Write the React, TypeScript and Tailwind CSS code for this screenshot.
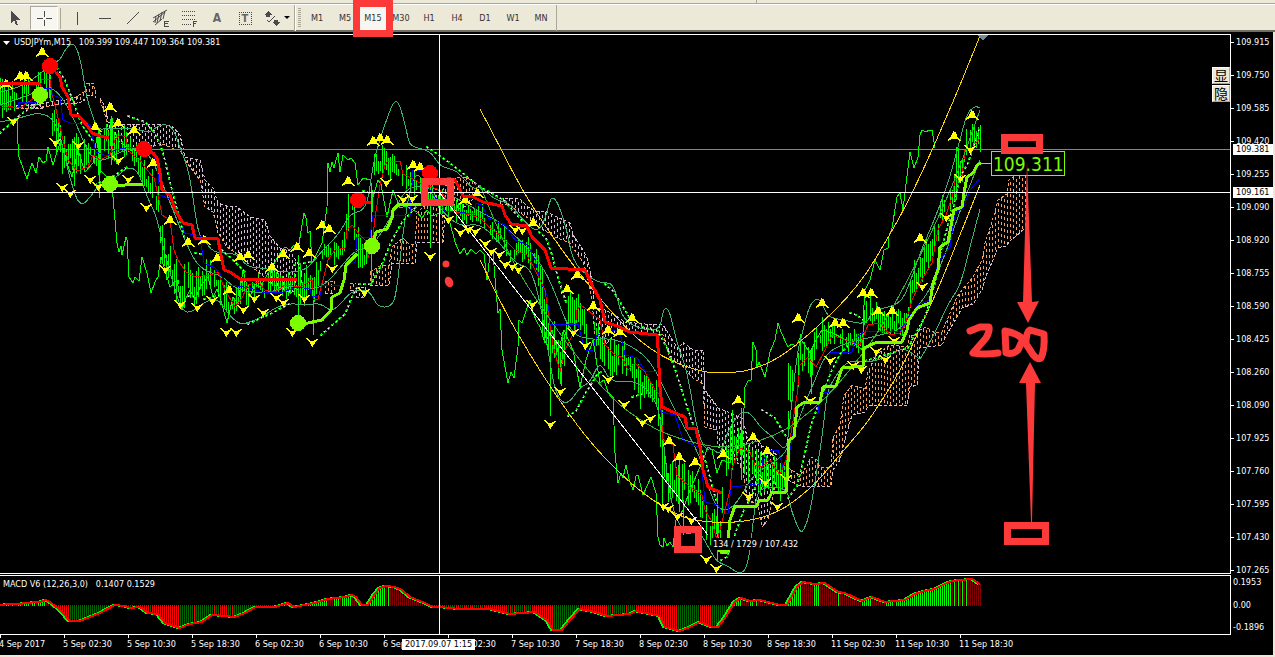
import type { ReactNode } from 'react'

type Pt = [number, number]
type Band = [number, number, number]

const nums = (s: string) => s.trim().split(/\s+/).map((p) => p.split(',').map(Number))
const pts = (s: string) => nums(s) as Pt[]
const bands = (s: string) => nums(s) as Band[]

// value of a keyframed series at x, column `col` of each keyframe
function at(keys: number[][], x: number, col: number) {
  if (x <= keys[0][0]) return keys[0][col]
  for (let i = 1; i < keys.length; i++) {
    const a = keys[i - 1]
    const b = keys[i]
    if (x <= b[0]) return a[col] + ((b[col] - a[col]) * (x - a[0])) / (b[0] - a[0] || 1)
  }
  return keys[keys.length - 1][col]
}

function noise(n: number) {
  const v = Math.sin(n * 12.9898) * 43758.5453
  return v - Math.floor(v)
}

// ---- price range per bar: x, high, low
const priceRange = bands(`
0,82,115 10,82,112 20,80,105 30,76,105 38,68,95 44,58,95 50,74,100 52,98,138 58,118,158 64,138,182 70,142,168 76,132,190
82,142,178 90,138,162 98,132,190 105,122,150 110,118,158 116,128,162 122,128,155 128,132,158 134,142,165 140,152,178
146,168,195 152,172,200 158,185,220 162,232,275 168,248,280 172,252,295 178,262,300 182,275,310 188,255,295 194,268,308
200,268,300 206,258,290 212,260,288 218,268,298 224,280,310 228,288,323 234,297,318 240,272,302 248,278,308 256,272,295
264,278,306 270,264,290 276,268,295 284,277,298 292,268,290 298,262,315 306,264,298 312,272,310 318,260,285 323,240,260
330,238,262 336,242,265 343,240,258 347,195,237 352,180,225 356,222,250 360,230,280 365,240,284 370,215,270 373,153,180
380,148,176 390,152,176 398,160,184 404,168,192 416,172,194 424,180,202 436,188,208 453,200,218 470,205,220 483,208,226
488,218,234 503,224,248 510,240,262 525,238,262 537,246,280 541,262,330 547,302,345 553,325,375 562,322,385 566,298,345
575,290,325 584,306,345 594,305,348 602,332,368 612,338,382 622,336,375 633,345,385 640,368,405 657,375,405 661,395,480
667,462,505 680,462,502 690,465,510 700,470,515 705,505,548 712,510,553 720,500,553 724,462,490 731,414,462 742,412,470
748,442,480 760,452,492 770,455,490 780,465,500 787,460,490 789,368,400 797,362,392 800,338,368 812,342,378 816,326,352
826,318,345 836,326,350 850,332,352 862,330,354 865,296,330 876,298,328 882,314,332 906,310,332 911,272,300 920,248,282
930,236,264 937,222,252 940,192,228 952,184,208 956,148,192 963,150,185 966,128,152 974,124,148 980,130,160`)

const spikes = bands(`99,130,198 111,116,165 162,225,262 313,300,335 298,255,322 430,183,248 371,183,285 550,340,416 561,360,386
662,410,505 717,490,560 683,500,535 679,452,512 732,410,470 741,408,480 811,350,394 788,363,400 956,147,200 980,125,152 49,70,98`)

// ---- clouds: x, top, bottom
const plumClouds = [
  '16,106,109 40,104,108 62,100,104 76,97,103',
  '100,98,100 106,108,118 108,122,130 120,124,142 130,124,150 145,124,150 160,124,143 172,126,148 180,135,150 185,157,160 200,160,180 205,180,207 213,188,212 218,203,233 227,206,247 237,207,254 250,217,265 265,220,278 270,236,283 280,248,288 290,251,293 297,262,290 303,276,287',
  '356,287,297 366,287,298',
  '500,198,204 510,198,205 520,199,213 528,207,218 535,211,225 547,212,232 555,216,237 570,223,243 573,235,248 583,250,262 587,258,275 592,280,300 595,308,335 605,310,345 615,315,335 625,322,330 645,324,333 663,325,335 670,336,358 678,349,363 683,342,367 693,350,378 703,350,384 705,390,427 717,406,430 718,408,447 730,413,453 743,419,470 747,437,500 758,440,505 762,446,527 768,449,520 772,450,500 778,457,472',
]
const sandClouds = [
  '30,106,109 44,102,108',
  '74,98,104 84,92,101 87,83,96 93,83,95 96,94,98',
  '325,282,293 335,281,293',
  '350,283,290 356,284,292',
  '370,272,285 382,265,285 389,266,285 392,247,263 403,238,263 408,243,263 415,245,263 417,213,242 428,202,242 443,190,242 445,186,212 457,178,210 466,177,206 474,182,198',
  '788,468,480 800,475,486 807,466,486 811,457,486 817,460,486 820,467,486 831,467,486 833,438,470 840,425,460 844,396,443 852,385,415 865,389,412 868,372,406 876,355,405 890,345,405 907,347,405 910,335,387 917,335,385 920,330,347 926,327,347 935,333,346 942,332,345 947,320,334 957,297,317 962,290,308 973,277,304 982,260,290 985,243,279 992,222,262 998,200,248 1007,194,246 1009,180,241 1014,176,238 1025,175,228',
]

function cloudPath(src: string) {
  const keys = bands(src)
  let d = ''
  for (let x = keys[0][0]; x <= keys[keys.length - 1][0]; x += 3) {
    const top = Math.round(at(keys, x, 1))
    const bottom = Math.round(at(keys, x, 2))
    const shift = Math.floor(x / 3) % 2 ? 0 : 3
    for (let y = top + shift; y < bottom; y += 6) d += `M${x + 0.5} ${y}v${Math.min(3, bottom - y)}`
  }
  return d
}

function cloudEdge(src: string, col: number) {
  return bands(src).map((b) => `${b[0]},${b[col]}`).join(' ')
}

// ---- indicator lines
const chikou = `17,118 17,130 19,157 27,179 29,172 32,163 36,173 39,157 43,163 46,161 48,147 53,165 57,152 61,140 67,163 72,177 78,150 85,172 93,163
97,137 100,170 110,180 113,197 117,243 119,252 121,246 122,255 126,237 127,240 129,277 133,283 135,277 139,281 142,257 147,273 151,293 155,282 158,277
161,257 167,277 170,287 177,280 182,310 186,298 190,290 195,300 200,287 208,277 213,297 217,289 220,297 227,323 233,297 238,304 243,270 250,297 255,284 260,287
270,270 275,262 280,253 285,247 290,250 294,245 298,250 304,213 306,218 308,233 310,231 312,263 316,255 322,243 327,207 328,163 330,172 332,162 334,168 338,153 340,172
343,155 348,160 351,158 355,163 358,185 363,178 370,180 373,197 378,180 381,184 387,217 393,190 400,208 406,206 413,210 417,212 422,218 427,210 432,216 440,213
450,223 455,242 460,254 464,248 467,255 471,249 476,254 480,250 484,254 487,280 490,255 493,253 496,290 498,313 500,309 502,350 508,383 511,372 514,378 518,347 519,320
522,323 525,314 530,300 533,313 537,322 540,327 545,343 552,330 558,352 564,330 573,350 580,387 586,360 593,340 600,383 604,380 608,392 613,397 615,453 618,483 621,473 623,478
626,465 629,479 633,490 636,476 638,475 643,495 651,477 656,493 658,537 660,545 663,547 664,538 667,546 670,542 673,547 676,520 683,510 690,490 703,460 708,447 712,450
717,473 722,460 730,463 736,445 743,430 745,387 748,381 751,380 753,342 756,350 757,367 759,362 765,377 770,352 775,340 778,323 781,332 788,347 792,344 796,346
800,338 806,347 810,353 816,340 822,330 833,333 842,338 853,343 863,350 863,320 865,290 870,280 875,260 880,270 884,250 888,248 889,236 892,228 897,197 900,193 903,210
907,176 910,152 914,168 918,157 920,135 922,130 926,132 929,130 932,130 935,148`

const bandLines = [
  // upper
  `0,92 20,88 40,74 55,62 60,60 66,48 72,43 77,48 82,67 86,95 92,115 98,130 108,128 133,128 150,133 157,126 167,124 174,130 180,148 187,165 192,190 196,220 200,237 205,240 213,253 237,253
  247,267 263,268 287,273 307,270 320,253 340,233 350,213 367,210 373,163 380,140 382,133 390,110 395,100 400,105 407,133 410,147 430,150 440,167 457,170 473,190 480,186 495,200 510,203 520,217
  537,233 545,220 550,200 553,197 558,203 567,230 573,263 593,280 603,283 612,283 617,297 623,320 643,330 660,330 663,310 667,308 670,313 678,347 687,370 697,430 705,450 713,448 720,456 728,430
  740,412 750,412 760,427 773,437 782,448 787,447 790,420 797,353 803,330 810,303 820,297 827,317 843,320 867,325 872,310 900,305 910,283 920,253 933,223 947,187 960,140 967,113 975,106 980,108`,
  // middle
  `0,105 30,95 45,88 52,88 62,97 73,117 83,140 90,155 100,162 115,155 130,148 145,150 155,165 165,190 175,215 185,240 195,262 207,272 220,275 235,288 250,292 270,293 290,285 310,290 325,285
  340,268 355,250 370,248 380,235 395,210 405,190 420,185 440,190 460,200 480,212 500,222 520,240 540,262 553,287 570,333 590,340 610,338 630,345 650,360 665,390 680,420 700,455 712,500 722,511
  732,508 742,495 750,480 760,470 775,462 788,450 800,415 815,380 825,355 840,345 860,340 880,335 900,330 915,310 930,290 945,255 955,225 968,190 980,160`,
  // lower
  `0,122 20,118 40,112 55,120 63,147 70,180 80,208 92,195 97,187 117,177 127,167 138,170 147,197 157,217 163,247 173,283 182,312 193,312 207,300 220,300 227,313 240,325 250,322 260,318 283,303
  307,305 320,303 332,312 342,302 353,290 370,290 377,307 392,307 397,290 403,230 413,172 425,180 440,210 460,227 480,223 500,243 517,265 530,267 540,300 550,363 555,390 562,403 570,402 580,387
  590,383 600,360 610,383 637,380 657,400 663,437 670,500 680,527 688,536 697,527 710,550 717,562 730,567 737,573 745,572 750,553 755,503 760,487 787,487 790,507 800,533 804,530 810,513
  817,470 823,430 827,393 833,380 847,360 867,363 887,357 903,347 917,357 920,360 927,347 933,337 950,300 960,287 970,247 980,209`,
]

const tenkan = `0,105 20,108 38,95 42,79 50,79 52,95 55,105 63,140 68,160 77,171 88,167 93,155 100,160 110,155 115,140 120,135 126,137 128,150 135,157 140,160 147,170 154,178 158,195 162,215 170,220
174,250 178,260 186,272 195,277 210,275 218,272 225,290 235,307 242,298 248,285 258,282 265,290 275,292 285,285 300,287 312,280 314,299 318,299 325,272 328,260 335,250 345,248 347,230 352,225 360,235
365,240 368,258 372,245 375,218 380,185 385,165 388,161 400,161 403,174 415,180 420,183 440,190 455,212 470,215 480,218 490,228 500,235 515,250 527,255 535,270 545,290 550,325 553,345 560,372 565,350
575,330 577,310 581,305 590,312 600,320 605,345 615,355 622,357 628,370 635,363 645,372 655,390 660,395 663,440 673,445 677,475 690,487 702,495 705,510 712,522 717,540 720,530 725,510 730,490 732,468
740,448 750,452 755,465 762,467 770,460 780,475 786,460 790,440 797,395 800,365 808,357 816,367 825,350 832,335 845,340 860,345 868,325 880,323 890,335 900,333 905,325 912,300 920,283 932,263
938,230 946,215 952,197 955,180 962,177 965,150 972,148 980,138`

const kijun = `0,107 18,107 18,102 40,102 44,88 50,88 53,95 60,98 63,120 70,123 85,124 90,125 93,140 96,152 107,156 115,150 130,147 150,150 157,163 160,195 172,200 177,215 185,233 200,236 204,263 215,268
222,277 230,285 250,288 262,292 280,293 297,287 310,289 312,296 320,296 322,285 342,285 348,265 355,262 357,237 370,237 373,215 410,215 413,170 425,170 430,190 445,211 475,214 475,203 482,205 488,218
505,225 515,240 528,245 535,260 540,280 547,295 550,324 578,324 585,350 593,350 597,335 612,330 620,332 625,355 637,358 645,371 660,371 661,412 675,415 683,440 700,448 705,502 718,505 722,513
728,513 731,487 760,484 763,460 770,450 778,450 784,470 787,475 790,450 797,413 818,413 820,392 829,392 830,353 852,352 856,338 865,331 900,331 910,315 918,305 930,300 938,262 950,247 955,213
963,208 970,190 980,178`

const redTrend = [
  '0,83 40,83',
  '56,72 60,77 62,87 68,97 71,115 79,116 82,120 87,125 92,133 100,136 109,138',
  '147,152 153,153 157,158 160,173 162,190 170,195 175,210 183,223 192,225 195,238 218,239 221,255 224,270 230,272 240,279 297,279',
  '358,202 371,203',
  '447,178 455,180 463,196 473,197 483,202 502,206 505,215 511,224 527,226 532,237 545,250 551,268 585,270 593,287 600,300 605,322 617,326 630,332 657,335 658,348 660,387 662,407 673,412 685,417 687,428 696,429 700,447 703,470 708,487 722,493',
]
const greenTrend = [
  '110,186 125,185 143,184',
  '298,323 308,323 322,320 331,310 332,297 340,293 344,280 346,265 357,254',
  '372,246 376,232 387,229 392,218 393,210 399,204 422,204',
  '728,540 730,520 735,506 757,506 759,500 768,500 772,492 786,492 788,463 789,440 794,437 797,407 803,403 820,402 823,387 836,386 842,368 863,366 864,348 875,343 902,342 907,330 909,320 917,308 930,303 933,283 938,270 940,247 948,242 954,210 962,207 964,193 967,177 973,173 977,165 981,163',
]

const sarRuns = [
  '0,133 20,115 36,104', '57,68 64,78 70,93 77,112 82,125 93,141', '128,116 145,122 154,132 160,144 163,153 170,182 178,213 185,240',
  '95,185 112,177 127,167', '222,250 235,262 247,274', '195,253 203,254', '188,296 194,296', '204,299 222,295', '248,324 270,314 291,303',
  '294,265 310,262', '321,335 345,314 352,297 359,284 371,284 383,262 392,240 402,222 418,205', '427,147 450,163 480,187 504,200 514,212 523,222',
  '539,232 546,238 552,255 558,278 566,302', '605,284 613,291 622,305 629,317', '642,327 658,331 668,350 676,372 688,410 697,435 706,463 716,500',
  '568,416 576,411 585,394 597,375 603,370', '632,397 642,394', '721,560 727,557 733,540 743,512 752,495 761,473', '762,410 775,418 788,440',
  '788,498 797,486 803,462 811,425 820,400 832,370 840,354 849,345', '865,361 885,355 908,348 912,340 925,317 935,283 940,255 948,225 954,205 960,177 968,163 974,145 980,126',
  '850,313 857,315 863,320', '363,191 370,193',
]

const upMarks = pts(`42,52 20,76 26,76 6,84 95,127 110,107 118,123 134,130 153,163 170,220 188,242 204,240 217,258 240,257 229,290 248,255 272,267 283,254
297,247 309,253 322,225 329,229 348,181 373,141 380,138 387,140 413,165 420,167 465,200 477,193 533,223 577,275 567,289 593,306 632,318 608,330 620,332
669,441 679,457 695,462 723,454 738,400 753,437 767,451 822,303 798,318 863,293 871,293 878,311 892,311 835,323 843,323 920,238 954,136 972,115`)
const downMarks = pts(`13,122 55,143 78,146 118,161 128,180 62,188 70,194 90,180 98,187 146,208 165,270 180,305 197,308 212,301 226,333 236,333 243,310 254,299
263,313 276,298 283,303 304,299 292,333 312,343 332,269 364,293 386,183 430,257 403,200 412,199 448,220 460,233 468,230 475,232 485,244 491,252 499,255
505,265 512,267 518,270 515,230 522,231 532,305 573,333 585,346 550,425 560,392 608,380 624,405 642,423 650,419 663,507 668,509 677,517 691,521 706,560
716,569 748,497 765,483 777,507 786,479 810,401 830,361 853,366 861,370 876,352 885,360 894,341 922,287 946,218 960,179 970,150`)

const upperArc = '480,109 500,147 523,192 550,233 575,268 607,307 630,332 650,349 675,363 703,372 720,373 743,372 762,366 780,357 800,342 827,318 847,298 867,273 883,246 900,217 917,183 933,148 946,118 958,90 980,36'
const midArc = '480,185 500,235 520,275 550,320 580,361 613,400 640,420 663,433 697,444 725,448 750,444 780,433 800,420 827,397 850,370 875,337 893,307 913,270 935,225 957,175 980,110'
const lowerArc = '480,260 503,308 530,355 557,397 585,436 613,467 640,491 663,507 680,516 697,521 727,523 755,520 780,511 800,497 817,482 833,463 850,443 867,423 880,403 893,383 908,355 922,323 935,296 950,260 980,185'

const macdLine = pts(`0,605 10,604 20,604 25,603 40,602 46,600 50,602 60,610 70,621 80,621 100,613 115,605 125,606 130,608 140,607 148,613 158,614 165,623 180,628
190,624 202,622 212,615 225,616 235,617 245,613 256,607 275,607 288,603 294,607 315,603 328,599 345,597 352,595 356,597 362,605 368,605 375,594 380,588 386,586 395,587 402,590
410,597 425,603 433,607 440,607 460,609 490,609 510,614 535,612 548,621 553,630 562,630 570,620 580,609 595,612 607,616 630,614 636,611 660,616 665,627 680,631 690,627 700,622
712,627 718,627 725,618 735,602 741,598 750,601 760,600 780,605 787,605 797,587 803,582 815,584 825,583 838,592 845,593 862,601 872,597 885,602 905,600 915,594 925,591 935,589
945,584 952,581 960,580 972,579 980,584`)

const prices = ['109.915', '109.750', '109.585', '109.420', '109.255', '109.090', '108.920', '108.755', '108.590', '108.425', '108.260', '108.090', '107.925', '107.760', '107.595', '107.430', '107.265']
const times = ['4 Sep 2017', '5 Sep 02:30', '5 Sep 10:30', '5 Sep 18:30', '6 Sep 02:30', '6 Sep 10:30', '6 Sep 18:30', '7 Sep 02:30', '7 Sep 10:30', '7 Sep 18:30', '8 Sep 02:30', '8 Sep 10:30', '8 Sep 18:30', '11 Sep 02:30', '11 Sep 10:30', '11 Sep 18:30']
const frames = ['M1', 'M5', 'M15', 'M30', 'H1', 'H4', 'D1', 'W1', 'MN']

const pressed = 'border border-t-[#aca899] border-l-[#aca899] border-r-white border-b-white bg-[#f7f6f0]'

function Line({ d, color, width = 1 }: { d: string; color: string; width?: number }) {
  return <polyline points={d} fill="none" stroke={color} strokeWidth={width} strokeLinejoin="round" />
}

// rounds the corners by running a quadratic through the midpoints
function Curve({ d, color }: { d: string; color: string }) {
  const p = pts(d)
  let path = `M${p[0]}`
  for (let i = 1; i < p.length - 1; i++) {
    path += `Q${p[i]} ${(p[i][0] + p[i + 1][0]) / 2},${(p[i][1] + p[i + 1][1]) / 2}`
  }
  return <path d={`${path}L${p[p.length - 1]}`} fill="none" stroke={color} />
}

function candlePath() {
  let d = ''
  for (let x = 0; x <= 980; x += 2) {
    if (noise(x + 31) < 0.12) continue
    const hi = at(priceRange, x, 1) - 4
    const lo = at(priceRange, x, 2) + 4
    const size = lo - hi
    const top = hi + noise(x) * size * 0.5
    const bottom = lo - noise(x + 77) * size * 0.45
    d += `M${x + 0.5} ${Math.round(top)}V${Math.round(bottom)}`
  }
  for (const [x, hi, lo] of spikes) d += `M${x + 0.5} ${hi}V${lo}`
  return d
}

function PriceChart() {
  return (
    <svg className="min-w-0 flex-1" role="img" aria-label="USDJPYm M15 price chart" shapeRendering="crispEdges">
      <g transform="translate(0 -35)">
        {plumClouds.map((c) => (
          <g key={c} fill="none">
            <path d={cloudPath(c)} stroke="#d8bfd8" />
            <polyline points={cloudEdge(c, 1)} stroke="#d8bfd8" strokeDasharray="3 2" />
            <polyline points={cloudEdge(c, 2)} stroke="#f4a460" strokeDasharray="3 2" />
          </g>
        ))}
        {sandClouds.map((c) => (
          <g key={c} fill="none">
            <path d={cloudPath(c)} stroke="#f4a460" />
            <polyline points={cloudEdge(c, 1)} stroke="#f4a460" strokeDasharray="3 2" />
            <polyline points={cloudEdge(c, 2)} stroke="#d8bfd8" strokeDasharray="3 2" />
          </g>
        ))}

        <line x1="0" x2="100%" y1="149.5" y2="149.5" stroke="#778899" />
        <path d={candlePath()} stroke="#00ff00" />
        <Line d={chikou} color="#00ff00" />
        {bandLines.map((b) => (
          <Curve key={b} d={b} color="#3cb371" />
        ))}
        <Line d={kijun} color="#0000ff" />
        <Line d={tenkan} color="#ff0000" />
        <Curve d={midArc} color="#32b432" />
        <Curve d={upperArc} color="#ffd700" />
        <Curve d={lowerArc} color="#ffd700" />

        {sarRuns.map((r) => (
          <g key={r} fill="none" strokeLinecap="square">
            <polyline points={r} stroke="#00e600" strokeWidth="2" strokeDasharray="1 4" />
            <polyline points={r} stroke="#ffffff" strokeWidth="1" strokeDasharray="0 5" />
          </g>
        ))}

        {upMarks.map(([x, y], i) => (
          <path key={i} d={`M${x} ${y - 5}l-3 6l-3 4l4 -3h2l1 -6l2 5l4 4l-4 -3h-3`} fill="#ffff00" stroke="#ffff00" />
        ))}
        {downMarks.map(([x, y], i) => (
          <path key={i} d={`M${x} ${y + 4}l3 -5l3 -3l-4 2h-2l0 5l-2 -4l-4 -4l4 3h3`} fill="#ffff00" stroke="#ffff00" />
        ))}

        {redTrend.map((r) => (
          <Line key={r} d={r} color="#ff0000" width={3} />
        ))}
        {greenTrend.map((g) => (
          <Line key={g} d={g} color="#7cfc00" width={3} />
        ))}
        {pts('50,66 144,149 358,200 430,173').map(([x, y]) => (
          <circle key={x} cx={x} cy={y} r="8" fill="#ff0000" />
        ))}
        {pts('40,95 110,184 298,323 372,246 724,546').map(([x, y]) => (
          <circle key={x} cx={x} cy={y} r="8" fill="#7cfc00" />
        ))}

        <line x1="439" y1="192" x2="708" y2="535" stroke="#ffffff" />
        <line x1="0" x2="100%" y1="192.5" y2="192.5" stroke="#ffffff" />
        <path d="M977 35h11l-5 6z" fill="#778899" />

        <path d="M981 163.5h10" stroke="#7cfc00" />
        <rect x="991.5" y="151.5" width="73" height="24" fill="#000000" stroke="#7cfc00" />
        <text x="993" y="171" fill="#7cfc00" className="font-['DejaVu_Sans_Condensed','Noto_Sans',sans-serif] text-[19px]">109.311</text>
        <rect x="711" y="538" width="88" height="12" fill="#000000" />
        <text x="713" y="547" fill="#ffffff">134 / 1729 / 107.432</text>
      </g>
      <line x1="439.5" x2="439.5" y1="0" y2="100%" stroke="#ffffff" />
      <Annotations />
    </svg>
  )
}

function Annotations() {
  return (
    <g transform="translate(0 -35)" fill="none" stroke="#fd3a3a" strokeWidth="7">
      <rect x="424.5" y="181.5" width="26" height="21" />
      <rect x="677.5" y="529.5" width="21" height="20" />
      <rect x="1004.5" y="137.5" width="35" height="13" />
      <rect x="1007.5" y="525.5" width="38" height="16" />
      <g shapeRendering="auto" fill="#fd3a3a" stroke="none">
        <path d="M1027 162L1032 302L1039 301L1028 323L1017 302L1023 302Z" />
        <path d="M1030 362L1041 383L1035 383L1032 522H1031L1026 383L1019 383Z" />
        <circle cx="446" cy="264" r="3.5" />
        <ellipse cx="449" cy="282" rx="4" ry="5.5" transform="rotate(-25 449 282)" />
      </g>
      <g shapeRendering="auto" strokeLinecap="round" strokeLinejoin="round">
        <path d="M970 331L980 327H989Q990 331 986 338L973 353Q985 355 998 353" />
        <path d="M1005 331L1006 353Q1013 355 1018 350L1023 339Q1016 333 1005 331" />
        <path d="M1026 344Q1026 332 1030 330L1044 334Q1045 350 1041 358Q1036 361 1030 350Z" />
      </g>
    </g>
  )
}

function MacdChart() {
  const groups: Record<string, string> = { '#00ff00': '', '#800000': '', '#ff0000': '', '#006400': '' }
  for (let x = 0; x <= 980; x += 2) {
    const y = at(macdLine, x + 2, 1)
    const slope = at(macdLine, x + 4, 1) - at(macdLine, x, 1)
    const flip = Math.abs(slope) < 0.7 && noise(x) > 0.65
    const falling = slope > 0 !== flip
    const color = y < 605 ? (falling ? '#800000' : '#00ff00') : falling ? '#ff0000' : '#006400'
    groups[color] += `M${x + 0.5} ${y < 605 ? 606 : 605}V${Math.round(y)}`
  }
  const line = macdLine.map((p) => p.join(',')).join(' ')
  return (
    <svg className="h-[58px] w-full" role="img" aria-label="MACD histogram" shapeRendering="crispEdges">
      <g transform="translate(0 -576)">
        {Object.entries(groups).map(([color, d]) => (
          <path key={color} d={d} stroke={color} />
        ))}
        <g transform="translate(-2 0)">
          <Line d={line} color="#00ff00" width={2} />
        </g>
        <Line d={line} color="#ff0000" width={2} />
      </g>
      <line x1="439.5" x2="439.5" y1="0" y2="100%" stroke="#ffffff" />
    </svg>
  )
}

function Tool({ label, children, className = 'w-7' }: { label: string; children: ReactNode; className?: string }) {
  return (
    <button type="button" aria-label={label} className={`flex h-6 items-center justify-center ${className}`}>
      <svg width="18" height="18" viewBox="0 0 18 18" fill="none" stroke="#4a4a4a" shapeRendering="crispEdges">
        {children}
      </svg>
    </button>
  )
}

function Toolbar() {
  return (
    <header className="bg-[#ece9d8]">
      <div className="flex h-[3px]">
        <div className="h-[3px] w-[757px] border-r border-[#aca899]" />
      </div>
      <div className="flex h-[29px] items-center border-t border-b-2 border-t-[#aca899] border-b-[#716f64] pt-[2px] shadow-[inset_0_1px_0_#ffffff]">
        <Tool label="Cursor" className="w-[30px]">
          <path d="M5 2v12l3 -3l2 5h2l-2 -5h4z" fill="#4a4a4a" stroke="none" />
        </Tool>
        <Tool label="Crosshair" className={`w-7 ${pressed}`}>
          <path d="M9.5 2v6M9.5 11v6M2 9.5h6M11 9.5h6" />
        </Tool>
        <div className="mr-[2px] ml-[2px] h-[21px] w-px bg-[#aca899]" />
        <Tool label="Vertical line">
          <path d="M9.5 3v13" />
        </Tool>
        <Tool label="Horizontal line">
          <path d="M3 9.5h12" />
        </Tool>
        <Tool label="Trendline">
          <path d="M3 15L15 3" shapeRendering="auto" />
        </Tool>
        <Tool label="Equidistant channel">
          <path d="M1 13L13 3M3 16L10 10M1 9L15 1M4 7l-1 7M7 5l-2 9M10 3l-2 9M13 2l-2 8" shapeRendering="auto" />
          <path d="M16.5 12.5h-4v5h4M12.5 14.5h3" />
        </Tool>
        <Tool label="Fibonacci retracement">
          <path d="M2 2.5h14M2 6.5h14M2 10.5h14M2 15.5h9" strokeDasharray="1 1" />
          <path d="M16.5 12.5h-3v5M13 14.5h3" />
        </Tool>
        <button type="button" aria-label="Text" className="h-6 w-7 font-['DejaVu_Sans_Condensed',sans-serif] text-[12px] font-bold text-[#666666]">
          A
        </button>
        <button type="button" aria-label="Text label" className="flex h-6 w-7 items-center justify-center">
          <span className="h-[13px] w-[13px] border border-dotted border-[#4a4a4a] text-[11px] leading-[11px] font-bold text-[#666666]">T</span>
        </button>
        <Tool label="Arrows" className="w-[25px]">
          <path d="M5 2l4 4h-2v2h-4v-2h-2zM13 17l-4 -4h2v-2h4v2h2z" fill="#4a4a4a" stroke="none" />
          <path d="M4 11l2 2l6 -6" shapeRendering="auto" />
        </Tool>
        <svg width="10" height="6" viewBox="0 0 10 6" aria-hidden="true">
          <path d="M0 1h6l-3 3z" fill="#000000" />
        </svg>
        <div className="h-[26px] w-[2px] border-l border-[#aca899] bg-white" />
        <div className="mr-[2px] ml-[2px] h-5 w-[3px] bg-[repeating-linear-gradient(#aca899_0_1px,#ece9d8_1px_2px)]" />
        {frames.map((f) =>
          f === 'M15' ? (
            <div key={f} className="relative h-6 w-7">
              <button type="button" aria-pressed="true" className={`h-6 w-7 ${pressed}`}>
                {f}
              </button>
              <div className="pointer-events-none absolute -inset-x-[6px] -top-[6px] z-10 h-[37px] border-[7px] border-[#fd3a3a]" />
            </div>
          ) : (
            <button key={f} type="button" className="h-6 w-7">
              {f}
            </button>
          ),
        )}
        <div className="ml-[1px] h-[26px] w-px bg-[#aca899]" />
      </div>
    </header>
  )
}

function PriceAxis() {
  return (
    <div className="relative flex-1 pt-[3px]">
      <ul className="flex flex-col gap-[22px]">
        {prices.map((p) => (
          <li key={p} className="flex h-[11px] items-center gap-[2px]">
            <span className="h-px w-[3px] bg-white" />
            {p}
          </li>
        ))}
      </ul>
      <span className="absolute top-[110px] left-[2px] h-[11px] w-10 bg-white pl-[3px] text-black">109.381</span>
      <span className="absolute top-[153px] left-[2px] h-[11px] w-10 bg-white pl-[3px] text-black">109.161</span>
    </div>
  )
}

export default function App() {
  return (
    <div className="flex min-h-screen flex-col overflow-hidden bg-[#ece9d8] font-['DejaVu_Sans_Condensed','Noto_Sans','Noto_Sans_CJK_SC',sans-serif] text-[9px] leading-[11px] text-[#333333]">
      <Toolbar />
      <main className="mr-[2px] mb-[2px] flex flex-1 flex-col bg-black pt-[2px] text-white">
        <div className="flex flex-1">
          <div className="relative flex min-w-0 flex-1 flex-col">
            <section className="flex min-h-[540px] flex-1 border-y border-r border-white">
              <PriceChart />
            </section>
            <h1 className="absolute top-[3px] left-[3px] flex items-center gap-1 whitespace-pre">
              <svg width="7" height="4" viewBox="0 0 7 4" aria-hidden="true">
                <path d="M0 0h7l-3.500 4z" fill="#ffffff" />
              </svg>
              {'USDJPYm,M15   109.399 109.447 109.364 109.381'}
            </h1>
            <div className="absolute top-[33px] right-[1px] flex flex-col gap-px">
              {['显', '隐'].map((t) => (
                <button key={t} type="button" className="flex h-[17px] w-[18px] items-center justify-center border border-white border-r-[#aca899] border-b-[#aca899] bg-[#ece9d8] pb-[2px] font-['Noto_Sans_CJK_SC',sans-serif] text-[14px] leading-[14px] text-black">
                  {t}
                </button>
              ))}
            </div>
            <section className="relative mt-px flex border-y border-r border-white">
              <MacdChart />
              <h2 className="absolute top-[3px] left-[3px] whitespace-pre">{'MACD V6 (12,26,3,0)   0.1407 0.1529'}</h2>
            </section>
          </div>
          <aside className="flex w-[42px] flex-col">
            <PriceAxis />
            <ul className="flex h-[59px] flex-col justify-between pt-px pb-[2px] pl-[2px]">
              <li>0.1953</li>
              <li>0.00</li>
              <li>-0.1896</li>
            </ul>
          </aside>
        </div>
        <footer className="relative h-5 overflow-hidden">
          <ol className="flex">
            {times.map((t) => (
              <li key={t} className="w-16 shrink-0 whitespace-nowrap">
                <span className="mb-px block h-[3px] w-px bg-white" />
                <span className="-ml-px block">{t}</span>
              </li>
            ))}
          </ol>
          <span className="absolute top-1 left-[402px] h-[11px] w-[73px] bg-white text-center text-black">2017.09.07 1:15</span>
        </footer>
      </main>
    </div>
  )
}
